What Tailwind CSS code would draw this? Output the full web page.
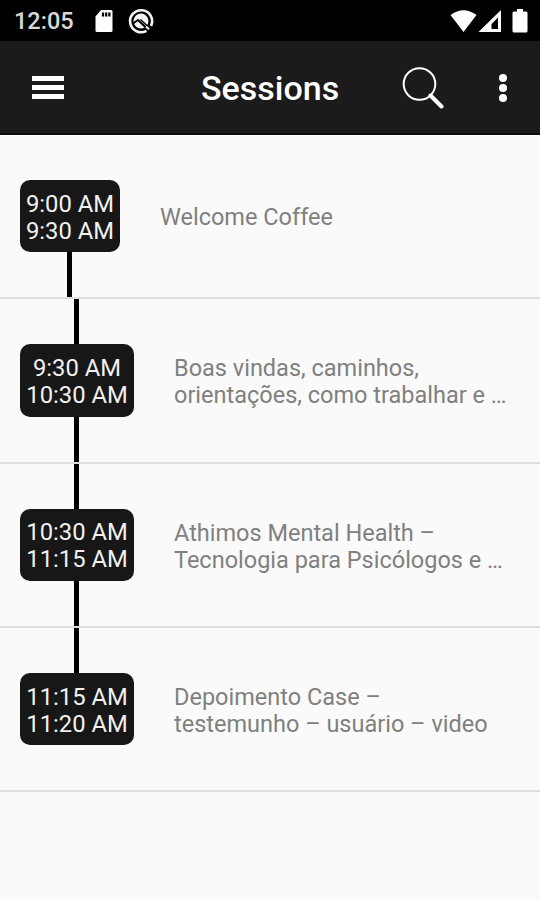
<!DOCTYPE html>
<html lang="pt">
<head>
    <meta charset="UTF-8">
    <title>Sessions</title>
    <script src="https://cdn.jsdelivr.net/npm/@tailwindcss/browser@4"></script>
</head>
<body class="bg-[#fafafa] min-h-screen overflow-hidden font-['Roboto',sans-serif]">
    <!-- Status bar -->
    <div class="bg-black h-[41px] flex items-center text-[#d8d8d8]">
        <span class="ml-[14px] mt-[3px] w-[80px] text-[23.500px] leading-none font-medium">12:05</span>
        <svg class="w-[19px] h-[24px]" viewBox="0 0 19 24">
            <path fill="#fff" d="M7 1h10q1.500 0 1.500 1.500v19q0 1.500-1.500 1.500h-14q-1.500 0-1.500-1.500V7.500z"/>
            <path stroke="#000" stroke-width="2.200" d="M9 3.500v4M12.200 3.500v4M15.400 3.500v4"/>
        </svg>
        <svg class="ml-[15px] w-[26px] h-[26px]" viewBox="0 0 26 26" fill="none">
            <path stroke="#f2f2f2" stroke-width="2.600" d="M18.500 22.800A11 11 0 1 1 23 18"/>
            <circle cx="13" cy="13" r="7.500" fill="#f2f2f2"/>
            <path stroke="#000" stroke-width="2" d="M5 15.500l5-3.500 9.500 9"/>
            <path stroke="#000" stroke-width="1.500" d="M12.500 11.500l8.500 8"/>
            <path stroke="#f2f2f2" stroke-width="2.200" d="M18 18.500l3 2.800"/>
        </svg>
        <svg class="ml-auto w-[27px] h-[24px]" viewBox="0 0 27 24">
            <path fill="#fff" d="M.500 6Q13.500-3.500 26.500 6L13.500 23z"/>
        </svg>
        <svg class="ml-[1px] w-[24px] h-[24px]" viewBox="0 0 24 24">
            <path fill="#fff" fill-rule="evenodd" d="M23 1v22H.500zM20 8.500v11.500H13.500v-5z"/>
        </svg>
        <svg class="ml-[10px] mr-[12px] w-[16px] h-[24px]" viewBox="0 0 16 24">
            <path fill="#fff" d="M5 0h6v2.500h3q1.500 0 1.500 1.500v18q0 1.500-1.500 1.500H2q-1.500 0-1.500-1.500V4Q.500 2.500 2 2.500h3z"/>
        </svg>
    </div>

    <!-- Toolbar -->
    <header class="bg-[#1b1b1b] h-[94px] flex items-center border-b-2 border-[#0c0c0c]">
        <button class="ml-[32px] w-[32px] flex flex-col gap-[4px]">
            <span class="h-[5px] bg-white"></span>
            <span class="h-[5px] bg-white"></span>
            <span class="h-[5px] bg-white"></span>
        </button>
        <h1 class="ml-[137px] mt-[2px] w-[201px] text-[34px] leading-none font-medium text-white">Sessions</h1>
        <svg class="mt-[2px] w-[42px] h-[42px]" viewBox="0 0 42 42" fill="none" stroke="#fff">
            <circle cx="17.500" cy="17" r="15.800" stroke-width="2"/>
            <path d="M28.500 28.500L39.500 39.500" stroke-width="4" stroke-linecap="round"/>
        </svg>
        <button class="mt-[2px] ml-[55px] flex flex-col gap-[2px]">
            <span class="size-[8px] rounded-full bg-white"></span>
            <span class="size-[8px] rounded-full bg-white"></span>
            <span class="size-[8px] rounded-full bg-white"></span>
        </button>
    </header>

    <!-- Timeline -->
    <ul class="text-[23.500px] leading-[27.200px]">
        <li class="h-[164.300px] flex border-b-2 border-[#dedede] pl-[20px]">
            <div class="w-[100px] flex flex-col items-center">
                <span class="flex-1"></span>
                <div class="w-full h-[72.500px] pt-[11px] rounded-[10px] bg-[#171717] text-[#f0f0f0] text-[23.800px] text-center whitespace-nowrap">9:00 AM<br>9:30 AM</div>
                <span class="flex-1 w-[5px] mr-[1px] bg-black"></span>
            </div>
            <p class="self-center pt-[3px] ml-[40px] text-[#808080]">Welcome Coffee</p>
        </li>
        <li class="h-[164.300px] flex border-b-2 border-[#dedede] pl-[20px]">
            <div class="w-[114px] flex flex-col items-center">
                <span class="flex-1 w-[5px] mr-[1px] bg-black"></span>
                <div class="w-full h-[72.500px] pt-[11px] rounded-[10px] bg-[#171717] text-[#f0f0f0] text-[23.800px] text-center whitespace-nowrap">9:30 AM<br>10:30 AM</div>
                <span class="flex-1 w-[5px] mr-[1px] bg-black"></span>
            </div>
            <p class="self-center pt-[3px] ml-[40px] text-[#808080] whitespace-nowrap">Boas vindas, caminhos,<br>orientações, como trabalhar e …</p>
        </li>
        <li class="h-[164.300px] flex border-b-2 border-[#dedede] pl-[20px]">
            <div class="w-[114px] flex flex-col items-center">
                <span class="flex-1 w-[5px] mr-[1px] bg-black"></span>
                <div class="w-full h-[72.500px] pt-[10.500px] rounded-[10px] bg-[#171717] text-[#f0f0f0] text-[23.800px] text-center whitespace-nowrap">10:30 AM<br>11:15 AM</div>
                <span class="flex-1 w-[5px] mr-[1px] bg-black"></span>
            </div>
            <p class="self-center pt-[4px] ml-[40px] text-[#808080] whitespace-nowrap">Athimos Mental Health –<br>Tecnologia para Psicólogos e …</p>
        </li>
        <li class="h-[164.300px] flex border-b-2 border-[#dedede] pl-[20px]">
            <div class="w-[114px] flex flex-col items-center">
                <span class="flex-1 w-[5px] mr-[1px] bg-black"></span>
                <div class="w-full h-[72.500px] pt-[11px] rounded-[10px] bg-[#171717] text-[#f0f0f0] text-[23.800px] text-center whitespace-nowrap">11:15 AM<br>11:20 AM</div>
                <span class="flex-1"></span>
            </div>
            <p class="self-center pt-[4px] ml-[40px] text-[#808080] whitespace-nowrap">Depoimento Case –<br>testemunho – usuário – video</p>
        </li>
    </ul>
</body>
</html>
